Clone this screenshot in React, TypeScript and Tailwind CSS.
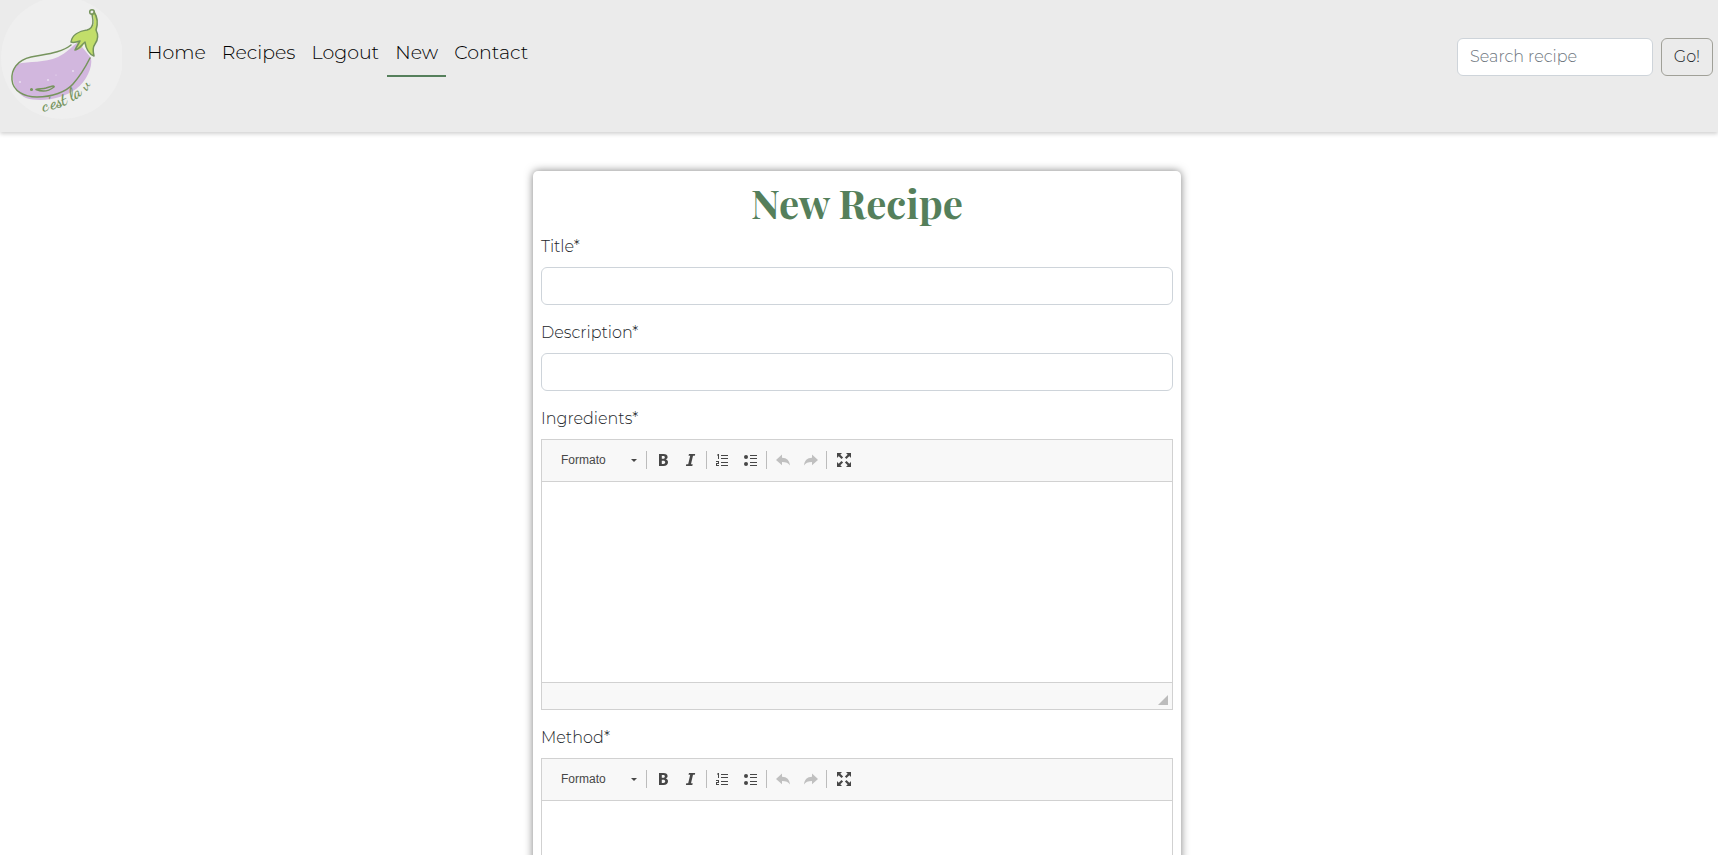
import type { ReactNode } from "react";

const links = ["Home", "Recipes", "Logout", "New", "Contact"];

function Logo() {
  return (
    <svg width="122" height="120" viewBox="0 0 122 120" fill="none" role="img" aria-label="c'est la V">
      <circle cx="62" cy="58" r="61" fill="#efefef" />
      <path
        d="M17 64C30 61 44 63 58 57C67 53 72 46 78 42L91 58C93 67 86 82 76 89C64 98 42 103 26 98C13 92 9 74 17 64Z"
        fill="#d2b7de"
      />
      <path
        d="M71 41C72 35 79 31 87 30C94 29 96 21 92 13L95 12C99 18 97 27 97 32C99 37 96 42 94 46L94 56C90 55 86 49 84 43C83 47 80 50 76 50C78 46 78 44 77 42C74 43 72 43 71 41Z"
        fill="#c2de6a"
      />
      <g stroke="#76945d" strokeWidth="1.5" strokeLinecap="round" strokeLinejoin="round">
        <path d="M71 45C61 53 45 54 31 57C17 60 11 70 12 80C13 91 24 97 37 97C52 97 66 92 73 84C80 76 85 68 90 58" />
        <path d="M71 42C72 35 79 31 87 30C95 28 93 19 92 14M94 12C98 18 98 24 96 30C99 36 98 40 95 44C92 48 93 52 94 56C89 54 86 49 85 42C82 44 80 49 75 50C77 46 79 43 80 41C77 42 73 43 71 42" />
        <circle cx="92" cy="12" r="2.3" />
        <path d="M36 89.500C42 92 49 91 54 87C55 85 50 86.500 46 88C43 89 39 88.500 36 89.500Z" />
        <circle cx="31.500" cy="89.500" r=".8" />
      </g>
      <g fill="#eadff0">
        <circle cx="20" cy="82" r="1" />
        <circle cx="48" cy="80" r="1" />
        <circle cx="73" cy="71" r="1" />
        <circle cx="56" cy="75" r=".6" />
      </g>
      <path id="motto" d="M43 111Q77 106 100 76" />
      <text
        className="font-['Dancing_Script','Caveat','Pacifico',cursive] text-[18px] font-bold"
        fill="#76945d"
      >
        <textPath href="#motto">c'est la v</textPath>
      </text>
    </svg>
  );
}

function Tool({ label, disabled, children }: { label: string; disabled?: boolean; children: ReactNode }) {
  return (
    <button
      type="button"
      aria-label={label}
      disabled={disabled}
      className="flex h-7 w-7 items-center justify-center text-[#474747] disabled:text-[#c0c0c0]"
    >
      <svg width="16" height="16" viewBox="0 0 16 16" fill="currentColor" aria-hidden="true">
        {children}
      </svg>
    </button>
  );
}

function Separator() {
  return <span className="mr-0.5 ml-px h-[18px] w-px bg-[#bcbcbc]" />;
}

function Editor({ id, label }: { id: string; label: string }) {
  return (
    <div className="mb-4">
      <label htmlFor={id} className="mb-2 block">
        {label}
      </label>
      <div className="border border-[#d1d1d1]">
        <div className="flex h-[42px] items-center border-b border-[#d1d1d1] bg-[#f8f8f8] pb-px pl-2">
          <div className="relative flex w-[95px] items-center font-['Liberation_Sans',Arial,sans-serif] text-xs font-normal text-[#474747]">
            <select
              aria-label={label + " format"}
              className="h-7 w-full appearance-none bg-transparent pl-[11px] outline-none"
            >
              <option>Formato</option>
            </select>
            <svg
              className="pointer-events-none absolute right-2"
              width="6"
              height="3"
              viewBox="0 0 6 3"
              fill="#474747"
              aria-hidden="true"
            >
              <path d="M0 0h6L3 3z" />
            </svg>
          </div>
          <Separator />
          <Tool label="Bold">
            <path
              fillRule="evenodd"
              d="M4 2h4.500c2.700 0 4.100 1.100 4.100 3 0 1.300-.8 2.100-1.900 2.500 1.500.3 2.300 1.300 2.300 2.800 0 2.300-1.700 3.700-4.500 3.700H4zm2.800 2v2.800h1.300c1.100 0 1.700-.5 1.700-1.400S9.200 4 8.100 4zm0 4.700V12h1.500c1.200 0 1.900-.6 1.900-1.700s-.7-1.600-2-1.600z"
            />
          </Tool>
          <Tool label="Italic">
            <path d="M6 2h6.200l-.4 1.800h-1.800l-2 8.400h1.700L9.300 14H2.900l.4-1.800h1.900l2-8.400H5.500z" />
          </Tool>
          <Separator />
          <Tool label="Numbered list">
            <path d="M6 3h7v1H6zM6 6h7v1H6zM6 10h7v1H6zM6 13h7v1H6zM2 3l1-1h1v5H3V3.500H2zM1 9h3v3H2v1h2v1H1v-3h2v-1H1z" />
          </Tool>
          <Tool label="Bulleted list">
            <path d="M7 3h7v1H7zM7 6h7v1H7zM7 10h7v1H7zM7 13h7v1H7z" />
            <circle cx="3" cy="5" r="2" />
            <circle cx="3" cy="12" r="2" />
          </Tool>
          <Separator />
          <Tool label="Undo" disabled>
            <path d="M7 2.500v3.300c5 0 7.500 3 8 7.700C13.500 11 11 10 7 10v3.300L1 8z" />
          </Tool>
          <Tool label="Redo" disabled>
            <path d="M9 2.500v3.300c-5 0-7.500 3-8 7.700C2.500 11 5 10 9 10v3.300l6-5.300z" />
          </Tool>
          <Separator />
          <Tool label="Maximize">
            <path d="M2 1h5L5.300 2.700l2.800 2.800-1.600 1.600-2.800-2.800L2 6zM16 1v5l-1.700-1.700-2.800 2.800-1.600-1.600 2.800-2.800L11 1zM2 15v-5l1.700 1.700 2.800-2.800 1.600 1.600-2.800 2.800L7 15zM16 15h-5l1.700-1.700-2.800-2.800 1.600-1.600 2.800 2.800L16 10z" />
          </Tool>
        </div>
        <textarea id={id} className="block h-[200px] w-full resize-none bg-white p-5 outline-none" />
        <div className="flex h-[27px] items-end justify-end border-t border-[#d1d1d1] bg-[#f8f8f8] p-1">
          <svg width="10" height="10" viewBox="0 0 10 10" aria-hidden="true">
            <path d="M10 0v10H0z" fill="#bcbcbc" />
          </svg>
        </div>
      </div>
    </div>
  );
}

function TextField({ id, label }: { id: string; label: string }) {
  return (
    <div className="mb-4">
      <label htmlFor={id} className="mb-2 block">
        {label}
      </label>
      <input
        id={id}
        type="text"
        className="block h-[38px] w-full rounded-md border border-[#ced4da] bg-white px-3 outline-none"
      />
    </div>
  );
}

export default function App() {
  return (
    <div className="min-h-screen bg-white font-[Montserrat,Inter,sans-serif] text-base font-light text-[#212529]">
      <header className="flex h-[132px] items-start bg-[#ebebeb] pr-[5px] shadow-[0_2px_4px_rgba(0,0,0,0.18)]">
        <a href="#home" className="mr-[17px]">
          <Logo />
        </a>
        <nav className="flex grow pt-8 text-[19px] leading-7 text-black">
          {links.map((link) => (
            <a
              key={link}
              href={"#" + link.toLowerCase()}
              className={
                link === "New"
                  ? "border-b-2 border-[#557f5b] px-2 pt-[7px] pb-2"
                  : "border-b-2 border-transparent px-2 pt-[7px] pb-2"
              }
            >
              {link}
            </a>
          ))}
        </nav>
        <form className="flex gap-2 pt-[38px]">
          <input
            type="search"
            aria-label="Search recipe"
            placeholder="Search recipe"
            className="h-[38px] w-[196px] rounded-md border border-[#ced4da] bg-white px-3 pb-0.5 outline-none placeholder:text-[#6c757d]"
          />
          <button type="button" className="h-[38px] w-[52px] rounded-md border border-[#a0a098]">
            Go!
          </button>
        </form>
      </header>
      <main className="pt-[39px] pr-1 pb-8">
        <form className="mx-auto w-[648px] max-w-full rounded-[5px] bg-white p-2 shadow-[0_0_8px_rgba(0,0,0,0.5)]">
          <h1 className="mb-2 text-center font-['Playfair_Display','Liberation_Serif',serif] text-[40px] leading-[48px] font-bold text-[#557f5b]">
            New Recipe
          </h1>
          <TextField id="title" label="Title*" />
          <TextField id="description" label="Description*" />
          <Editor id="ingredients" label="Ingredients*" />
          <Editor id="method" label="Method*" />
        </form>
      </main>
    </div>
  );
}
